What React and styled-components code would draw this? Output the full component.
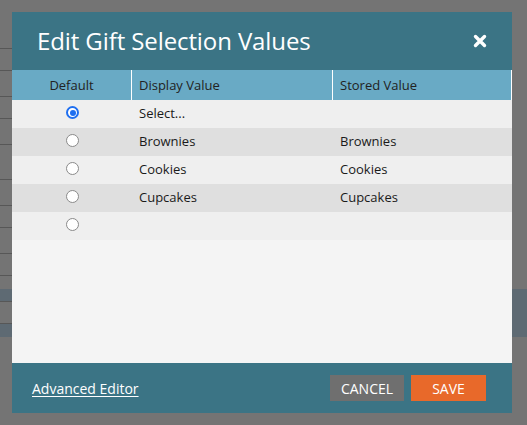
import React from "react";
import styled, { createGlobalStyle } from "styled-components";

const GlobalStyle = createGlobalStyle`
  html, body {
    margin: 0;
    padding: 0;
  }
  body {
    width: 527px;
    height: 425px;
    overflow: hidden;
    background: #747474;
    font-family: "Open Sans", "Liberation Sans", sans-serif;
  }
`;

const Page = styled.div`
  position: relative;
  width: 527px;
  height: 425px;
  background: #747474;
  overflow: hidden;
`;

// page behind the overlay (a list, mostly hidden by the dialog)
const BackList = styled.div`
  display: flex;
  flex-direction: column;
  padding-top: 48px;
`;

const bandColor = "#5e6a73";

const BackRow = styled.div`
  position: relative;
  height: ${(p) => p.h}px;
  width: 527px;
  background: ${(p) =>
    p.band
      ? bandColor
      : p.rightBand
      ? `linear-gradient(to right, transparent 0 400px, ${bandColor} 400px)`
      : "transparent"};
  &::before {
    content: "";
    display: ${(p) => (p.line ? "block" : "none")};
    width: 400px;
    height: 1px;
    background: #575757;
  }
`;

const Dialog = styled.div`
  position: absolute;
  left: 12px;
  top: 12px;
  width: 500px;
  height: 401px;
  display: flex;
  flex-direction: column;
  background: #f4f4f4;
`;

const Header = styled.div`
  height: 58px;
  background: #3b7485;
  display: flex;
  align-items: center;
  justify-content: space-between;
  padding: 0 24px 0 25px;
  flex-shrink: 0;
`;

const Title = styled.h1`
  margin: 0;
  margin-top: -2px;
  font-size: 24px;
  font-weight: 400;
  color: #ffffff;
  letter-spacing: -0.1px;
`;

const CloseButton = styled.button`
  border: 0;
  background: none;
  padding: 0;
  width: 16px;
  height: 16px;
  display: flex;
  align-items: center;
  justify-content: center;
  cursor: pointer;
`;

const Table = styled.div`
  display: flex;
  flex-direction: column;
`;

const HeadRow = styled.div`
  display: grid;
  grid-template-columns: 119px 201px 179px 1px;
  height: 30px;
  background: #69aac5;
`;

const HeadCell = styled.div`
  display: flex;
  align-items: center;
  justify-content: ${(p) => (p.center ? "center" : "flex-start")};
  padding-left: ${(p) => (p.center ? 0 : 7)}px;
  font-size: 13px;
  color: #222;
  border-left: ${(p) => (p.first ? "none" : "1px solid #ffffff")};
`;

const Edge = styled.div`
  background: #ffffff;
`;

const Row = styled.div`
  display: grid;
  grid-template-columns: 119px 201px 180px;
  height: 28px;
  background: ${(p) => (p.alt ? "#dfdfdf" : "#efefef")};
`;

const Cell = styled.div`
  display: flex;
  align-items: center;
  justify-content: ${(p) => (p.center ? "center" : "flex-start")};
  padding-left: ${(p) => (p.center ? 2 : 8)}px;
  padding-bottom: 3px;
  font-size: 13px;
  color: #1a1a1a;
`;

const Radio = styled.span`
  width: 13px;
  height: 13px;
  box-sizing: border-box;
  border-radius: 50%;
  background: #ffffff;
  border: ${(p) => (p.checked ? "2px solid #1f6ff0" : "1px solid #8a8a8a")};
  display: flex;
  align-items: center;
  justify-content: center;
  &::after {
    content: "";
    display: ${(p) => (p.checked ? "block" : "none")};
    width: 6px;
    height: 6px;
    border-radius: 50%;
    background: #1f6ff0;
  }
`;

const Body = styled.div`
  flex: 1;
  background: #f4f4f4;
`;

const Footer = styled.div`
  height: 50px;
  background: #3b7485;
  display: flex;
  align-items: center;
  justify-content: space-between;
  padding: 0 26px 0 20px;
  flex-shrink: 0;
`;

const EditorLink = styled.a`
  color: #ffffff;
  font-size: 14px;
  text-decoration: underline;
  text-underline-offset: 2px;
  cursor: pointer;
`;

const Buttons = styled.div`
  display: flex;
  gap: 7px;
`;

const Button = styled.button`
  height: 26px;
  width: ${(p) => p.w}px;
  border: 0;
  background: ${(p) => (p.primary ? "#e8692a" : "#6f6f6f")};
  color: #ffffff;
  font-family: "Open Sans", "Liberation Sans", sans-serif;
  font-size: 14px;
  text-transform: uppercase;
  padding: 0;
  cursor: pointer;
`;

const rows = [
  { display: "Select...", stored: "", checked: true },
  { display: "Brownies", stored: "Brownies" },
  { display: "Cookies", stored: "Cookies" },
  { display: "Cupcakes", stored: "Cupcakes" },
  { display: "", stored: "" },
];

const backRows = [
  { h: 22, line: true },
  { h: 26, line: true },
  { h: 22, line: true },
  { h: 26, line: true },
  { h: 35, line: true },
  { h: 26, line: true },
  { h: 22, line: true },
  { h: 26, line: true },
  { h: 22, line: true },
  { h: 14, line: true },
  { h: 12, band: true },
  { h: 22, line: true, rightBand: true },
  { h: 14, line: true, band: true },
];

function App() {
  return (
    <Page>
      <GlobalStyle />
      <BackList>
        {backRows.map((r, i) => (
          <BackRow key={i} {...r} />
        ))}
      </BackList>

      <Dialog>
        <Header>
          <Title>Edit Gift Selection Values</Title>
          <CloseButton aria-label="Close">
            <svg width="14" height="14" viewBox="0 0 14 14">
              <path
                d="M2.5 2.5 L11.5 11.5 M11.5 2.5 L2.5 11.5"
                stroke="#ffffff"
                strokeWidth="3.4"
                strokeLinecap="round"
              />
            </svg>
          </CloseButton>
        </Header>

        <Table>
          <HeadRow>
            <HeadCell center first>Default</HeadCell>
            <HeadCell>Display Value</HeadCell>
            <HeadCell>Stored Value</HeadCell>
            <Edge />
          </HeadRow>
          {rows.map((r, i) => (
            <Row key={i} alt={i % 2 === 1}>
              <Cell center>
                <Radio checked={r.checked} />
              </Cell>
              <Cell>{r.display}</Cell>
              <Cell>{r.stored}</Cell>
            </Row>
          ))}
        </Table>

        <Body />

        <Footer>
          <EditorLink>Advanced Editor</EditorLink>
          <Buttons>
            <Button w={74}>Cancel</Button>
            <Button primary w={75}>Save</Button>
          </Buttons>
        </Footer>
      </Dialog>
    </Page>
  );
}

export default App;
